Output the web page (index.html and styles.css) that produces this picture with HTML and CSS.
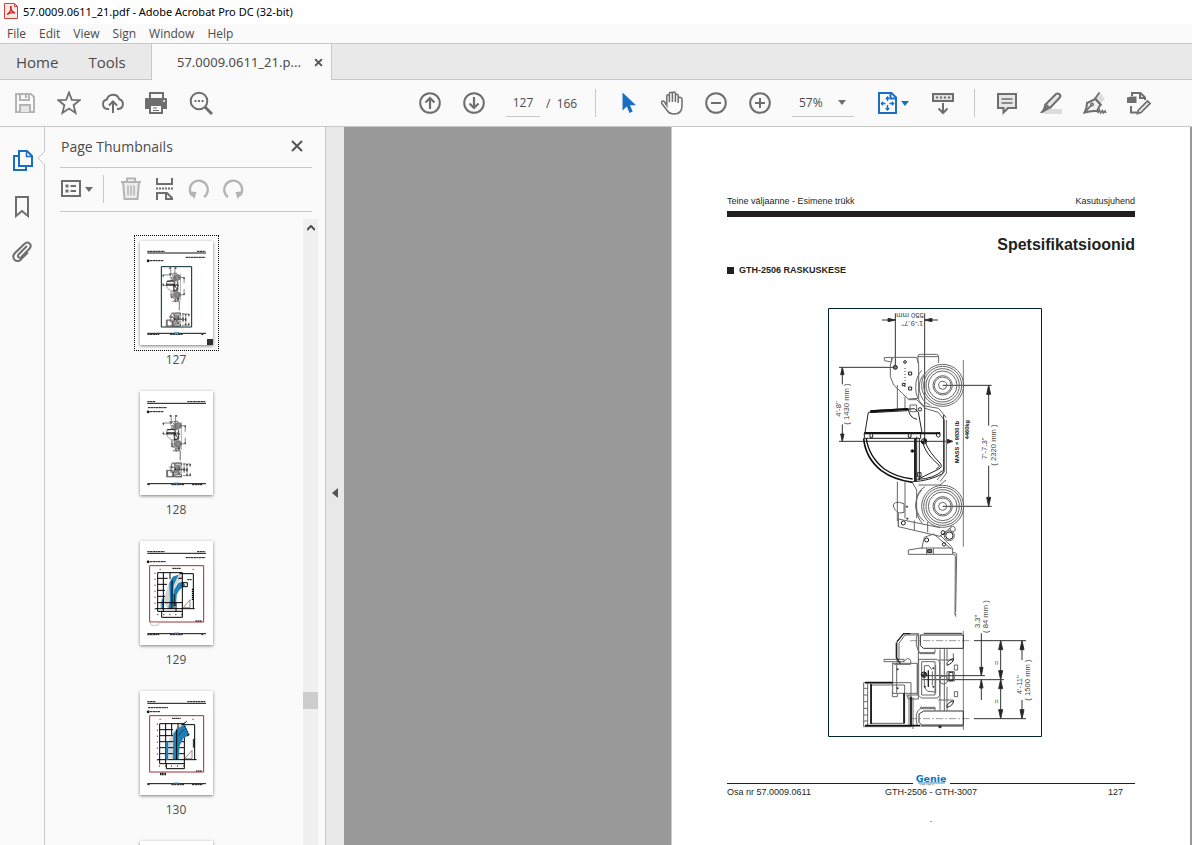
FILE: index.html
```html
<!DOCTYPE html>
<html lang="en">
<head>
    <meta charset="UTF-8">
    <title>57.0009.0611_21.pdf - Adobe Acrobat Pro DC (32-bit)</title>
    <link rel="stylesheet" href="styles.css">
</head>
<body>
    <header class="titlebar">
        <svg class="app-icon" viewBox="0 0 16 16">
            <path d="M1.500 .5h10l3 3v12h-13z" fill="#fbe9e7" stroke="#d6403a"/>
            <path d="M11.500 .5v3h3" fill="none" stroke="#d6403a"/>
            <path d="M4 11.500c2-1 5-5 4-8-1 0-.5 5 4 6.500-3-.8-5.500-.2-8 1.500z" fill="none" stroke="#d0201c" stroke-width="1.300"/>
        </svg>
        <span>57.0009.0611_21.pdf - Adobe Acrobat Pro DC (32-bit)</span>
    </header>

    <nav class="menubar">
        <button type="button">File</button>
        <button type="button">Edit</button>
        <button type="button">View</button>
        <button type="button">Sign</button>
        <button type="button">Window</button>
        <button type="button">Help</button>
    </nav>

    <div class="tabbar">
        <div class="tabs-fixed">
            <button type="button">Home</button>
            <button type="button">Tools</button>
        </div>
        <div class="tab-active">
            <button type="button" class="tab-name">57.0009.0611_21.p...</button>
            <button type="button" class="tab-close" aria-label="Close tab">
                <svg viewBox="0 0 8 8"><path d="M1 1l6 6M7 1L1 7" stroke="#555" stroke-width="1.800"/></svg>
            </button>
        </div>
        <div class="tab-rest"></div>
    </div>

    <div class="toolbar">
        <div class="group">
            <button type="button" class="tool disabled" aria-label="Save">
                <svg viewBox="0 0 24 24"><path d="M3 3h15l3 3v15H3z"/><path d="M7 3v6h9V3"/><path d="M13 4v3"/><path d="M7 21v-7h10v7" fill="#e6e6e6"/></svg>
            </button>
            <button type="button" class="tool" aria-label="Star">
                <svg viewBox="0 0 24 24"><path d="M12 1.500l2.800 7.300 7.900.4-6.100 5 2 7.700-6.600-4.300-6.600 4.300 2-7.700-6.100-5 7.900-.4z" stroke-width="1.800"/></svg>
            </button>
            <button type="button" class="tool" aria-label="Upload">
                <svg viewBox="0 0 24 24"><path d="M8 18H6.500a4.800 4.800 0 0 1-.6-9.500 6.400 6.400 0 0 1 12.300-.3A5 5 0 0 1 17.500 18H16"/><path d="M12 22V11M8 14.500l4-4 4 4"/></svg>
            </button>
            <button type="button" class="tool" aria-label="Print">
                <svg viewBox="0 0 24 24"><path d="M5 7V2h13v5"/><path d="M0 8q0-1 1-1h20q1 0 1 1v10H0z" fill="#6e6e6e" stroke="none"/><path d="M5 14h12v8H5z" fill="#fafafa"/><path d="M8 17h4M8 19.500h6" stroke-width="1"/><path d="M18 10h2" stroke="#fff" stroke-width="1.500"/></svg>
            </button>
            <button type="button" class="tool" aria-label="Find">
                <svg viewBox="0 0 24 24"><circle cx="10" cy="10" r="8.300"/><path d="M16 16l7 7" stroke-width="3"/><path d="M5.500 10h2M9 10h2M12.500 10h2"/></svg>
            </button>
        </div>

        <div class="group">
            <button type="button" class="tool" aria-label="Previous page">
                <svg viewBox="0 0 24 24"><circle cx="12" cy="12" r="9.800"/><path d="M12 18V7.500M7.500 11.500L12 7l4.500 4.500" stroke-width="2.200"/></svg>
            </button>
            <button type="button" class="tool" aria-label="Next page">
                <svg viewBox="0 0 24 24"><circle cx="12" cy="12" r="9.800"/><path d="M12 6v10.500M7.500 12.500L12 17l4.500-4.500" stroke-width="2.200"/></svg>
            </button>
            <input type="text" class="page-number" value="127" aria-label="Page number">
            <span class="page-total">/&nbsp; 166</span>
            <span class="divider"></span>
            <button type="button" class="tool" aria-label="Select">
                <svg viewBox="0 0 24 24"><path d="M6.500 1.500v18l4.300-4 2.700 6.500 3.200-1.400-2.700-6.300h6z" fill="#1b6fc2" stroke="none"/></svg>
            </button>
            <button type="button" class="tool" aria-label="Pan">
                <svg viewBox="0 0 24 24"><path d="M6.800 14.500V5.200q0-1.500 1.200-1.500t1.400 1.500V11 2.800q0-1.500 1.500-1.500t1.500 1.500V11 2.600q0-1.500 1.500-1.500t1.500 1.500V11 4.800q0-1.500 1.400-1.500t1.400 1.500V12 7.800q0-1.500 1.500-1.500T22 7.800V15q0 8-8 8-4.500 0-6.800-3.500L1.800 12.500q-.8-1.500.4-2.300 1.200-.6 2.400.8z" stroke-width="1.500"/></svg>
            </button>
            <button type="button" class="tool" aria-label="Zoom out">
                <svg viewBox="0 0 24 24"><circle cx="12" cy="12" r="9.800"/><path d="M7 12h10"/></svg>
            </button>
            <button type="button" class="tool" aria-label="Zoom in">
                <svg viewBox="0 0 24 24"><circle cx="12" cy="12" r="9.800"/><path d="M7 12h10M12 7v10"/></svg>
            </button>
            <div class="zoom-box">
                <select class="zoom-level" aria-label="Zoom level">
                    <option>57%</option>
                    <option>100%</option>
                </select>
                <svg class="caret" viewBox="0 0 8 5"><path d="M0 0h8L4 5z" fill="#6e6e6e"/></svg>
            </div>
            <button type="button" class="tool fit" aria-label="Fit page">
                <svg viewBox="0 0 24 24"><path d="M3 2h12.500L20 6.500V22H3z"/><path d="M14.500 2v5.500H20"/><path d="M11.500 6v4M9.800 8l1.700-2 1.700 2M11.500 14v5M9.800 17l1.700 2 1.700-2M5.500 12.500h4M7 10.800l-1.500 1.700L7 14.200M13.500 12.500h4M16 10.800l1.500 1.700-1.500 1.700" stroke-width="1.400"/></svg>
                <svg class="caret" viewBox="0 0 8 5"><path d="M0 0h8L4 5z" fill="#1b6fc2" stroke="none"/></svg>
            </button>
            <button type="button" class="tool" aria-label="Scrolling">
                <svg viewBox="0 0 24 24"><path d="M2 3h20v7H2z" fill="#e0e0e0"/><path d="M5 6.500h14" stroke-dasharray="2 2"/><path d="M12 12v10M7.500 17.500L12 22l4.500-4.500"/></svg>
            </button>
            <span class="divider"></span>
            <button type="button" class="tool" aria-label="Comment">
                <svg viewBox="0 0 24 24"><path d="M3 3h18v14h-8l-4.500 4.500V17H3z" fill="#e6e6e6"/><path d="M6.500 8h11M6.500 12h11" stroke-width="1.500"/></svg>
            </button>
            <button type="button" class="tool" aria-label="Highlight">
                <svg viewBox="0 0 24 24"><path d="M8 18h15v5H4z" fill="#dcdcdc" stroke="none"/><path d="M6.500 13.500L17 3q1.500-1.200 3.500.2 1.600 1.600.3 3.300L11 17z" fill="#e6e6e6"/><path d="M5.500 13.500l5 4.500-3 1.500-4 2.500H1l3-4z" fill="#6e6e6e" stroke="none"/></svg>
            </button>
            <button type="button" class="tool" aria-label="Sign">
                <svg viewBox="0 0 24 24"><path d="M14 7l3-5 5 6-4 4z" fill="#dcdcdc" stroke="none"/><path d="M1.500 21.500q2.500-4 2.500-9.500l8.500-4 5 5.500-3.500 6.500q-6-.5-12.500 1.500z" fill="#f0f0f0"/><path d="M11.500 6.500l7 8M12.500 7L16.500 1.500M2 21l6-6.500" stroke-width="1.800"/><circle cx="9" cy="13.500" r="1.200" stroke-width="1.500"/><path d="M14.500 22l2-3 1 3 2-2.500.8 2.500 1.800-2 .8 2" stroke-width="1.500"/></svg>
            </button>
            <button type="button" class="tool" aria-label="More tools">
                <svg viewBox="0 0 24 24"><path d="M5 5V2h8.500L18 6.500V9M13 2v5h5M4 15v6.500h6"/><path d="M0 6.500L4 5.500h5.500V12H0z" fill="#6e6e6e" stroke="none"/><path d="M11.500 19L20.500 10l2.500 2.500-9 9-3.500 1z" fill="#e6e6e6" stroke-width="1.700"/></svg>
            </button>
        </div>
    </div>

    <main class="workspace">
        <nav class="rail">
            <button type="button" class="rail-btn active" aria-label="Page Thumbnails">
                <svg viewBox="0 0 24 24"><path d="M9 3h8l5 5v10H9z"/><path d="M16.500 3v5.500H22" stroke-width="1.500"/><path d="M9 8H4v14h12v-4"/></svg>
            </button>
            <button type="button" class="rail-btn" aria-label="Bookmarks">
                <svg viewBox="0 0 24 24"><path d="M6 3h12v19l-6-5-6 5z"/></svg>
            </button>
            <button type="button" class="rail-btn" aria-label="Attachments">
                <svg viewBox="0 0 24 24"><path d="M17 6l-8.500 8.500q-1.200 1.500 0 2.700 1.300 1.100 2.600 0l8.500-8.700q2.300-2.800 0-5-2.500-2.100-5 .2L5 13q-3.200 3.500-.5 6.700 3.200 2.700 6.500-.3l7-7"/></svg>
            </button>
        </nav>

        <section class="panel">
            <svg class="pointer" viewBox="0 0 8 14"><path d="M8 0L1 7l7 7" fill="#fafafa" stroke="#c8c8c8"/></svg>
            <div class="panel-head">
                <h2>Page Thumbnails</h2>
                <button type="button" class="panel-close" aria-label="Close panel">
                    <svg viewBox="0 0 12 12"><path d="M1 1l10 10M11 1L1 11" stroke="#555" stroke-width="2"/></svg>
                </button>
            </div>
            <div class="panel-tools">
                <button type="button" class="options" aria-label="Options">
                    <svg viewBox="0 0 24 24"><path d="M2 4h18v15H2z"/><path d="M5.500 9h3M5.500 14h3" stroke-width="3"/><path d="M10.500 9H16M10.500 14H16"/></svg>
                    <svg class="caret" viewBox="0 0 8 5"><path d="M0 0h8L4 5z" fill="#6e6e6e" stroke="none"/></svg>
                </button>
                <span class="divider"></span>
                <button type="button" class="disabled" aria-label="Delete">
                    <svg viewBox="0 0 24 24"><path d="M2 5h20M8 4.500V1.500h8v3"/><path d="M4 5h16l-1.500 17h-13z" fill="#ececec"/><path d="M9 8.500v10M12 8.500v10M15 8.500v10" stroke-width="1.500"/></svg>
                </button>
                <button type="button" aria-label="Split">
                    <svg viewBox="0 0 24 24"><path d="M4 1v6h15V1M4 23v-7h10l5 5v2M13 16v6h6"/><path d="M3 11.500h18" stroke-dasharray="2 1"/></svg>
                </button>
                <button type="button" class="disabled" aria-label="Rotate left">
                    <svg viewBox="0 0 24 24"><path d="M5 18.500A9 9 0 1 1 17 20" stroke-width="2.400"/><path d="M1.500 14.500l8 .5-2 7z" fill="#b4b4b4" stroke="none"/></svg>
                </button>
                <button type="button" class="disabled" aria-label="Rotate right">
                    <svg viewBox="0 0 24 24"><path d="M19 18.500A9 9 0 1 0 7 20" stroke-width="2.400"/><path d="M22.500 14.500l-8 .5 2 7z" fill="#b4b4b4" stroke="none"/></svg>
                </button>
            </div>

            <div class="thumbs-area">
                <div class="thumbs">
                    <button type="button" class="thumb selected">
                        <svg class="sheet" viewBox="60 17 219 312">
                            <g class="rules"><path d="M82 53H258M82 294H164M174 294H258"/><path d="M82 48H134M231 48H256M197 66H256M90 76H131M82 297H118M150 297H188M244 297H250" stroke-dasharray="7 1"/><path d="M82 74h5v5h-5z"/></g>
                            <path d="M162 293h15" stroke="#0877bd" stroke-width="4"/>
                            <path d="M124 94h91v181h-91z" fill="none" stroke="#01262a" stroke-width="3"/>
                            <use href="#machine" transform="translate(122 92) scale(.143)" stroke-width="12"/>
                        </svg>
                        <span>127</span>
                    </button>
                    <button type="button" class="thumb">
                        <svg class="sheet" viewBox="60 17 219 312">
                            <g class="rules"><path d="M82 54H258M82 295H164M174 295H258"/><path d="M82 49H107M202 49H256M84 67H141M90 79H131M82 298H90M154 298H192M216 298H248" stroke-dasharray="7 1"/><path d="M82 77h5v5h-5z"/></g>
                            <path d="M162 294h15" stroke="#0877bd" stroke-width="4"/>
                            <use href="#machine" transform="translate(122 85) scale(.15)" stroke-width="12"/>
                        </svg>
                        <span>128</span>
                    </button>
                    <button type="button" class="thumb">
                        <svg class="sheet" viewBox="60 17 219 312">
                            <g class="rules"><path d="M82 54H258M82 295H164M174 295H258"/><path d="M82 49H134M231 49H256M197 67H256M90 79H138M82 298H118M150 298H188M244 298H250" stroke-dasharray="7 1"/><path d="M82 77h5v5h-5z"/></g>
                            <path d="M162 294h15" stroke="#0877bd" stroke-width="4"/>
                            <path d="M89 91h162v169H89z" fill="none" stroke="#a03030" stroke-width="3"/>
                            <path d="M118 102h6M217 102h6" stroke="#d66" stroke-width="3"/>
                            <path d="M148 140l12-17 22-8 7 12-19 18-9 30-2 47h-16l-9-20-8 20-7-4 4-27 12-10z" fill="#d5d5d5"/>
                            <path d="M148 144l10-20 18-6-8 16-7 16-4 70h-12l5-25zM162 165l12-21 14-6 8 12-18 14-8 14-2 34h-8zM124 200l7-16v38h-6z" fill="#1d7fb5"/>
                            <g fill="none" stroke="#000" stroke-width="3"><path d="M113 112h74v134M113 129h30M175 129h12M113 147h28M113 165h22M113 183h22M113 202h74M106 220h118M113 112v116h74M130 112v118M150 112v20M168 202v26M125 228v18h62M178 115h42v105"/><path d="M188 142h14v12h-14zM156 135v85M162 175v45"/><path d="M190 217l20-24v24z" stroke="#555" stroke-width="2"/><path d="M157 99h26M226 257h20M202 133h14" stroke-dasharray="5 1"/><path d="M105 112v110M112 238h74" stroke-dasharray="3 15"/><path d="M218 160v35" stroke-width="5" stroke-dasharray="4 2"/></g>
                            <path d="M91 262l3 8h20l3-8" fill="#fff" stroke="#555"/>
                        </svg>
                        <span>129</span>
                    </button>
                    <button type="button" class="thumb">
                        <svg class="sheet" viewBox="60 17 219 312">
                            <g class="rules"><path d="M82 54H258M82 295H164M174 295H258"/><path d="M82 49H107M202 49H256M84 67H144M90 79H120M82 298H90M154 298H192M216 298H248" stroke-dasharray="7 1"/><path d="M82 77h5v5h-5z"/></g>
                            <path d="M162 294h15" stroke="#0877bd" stroke-width="4"/>
                            <path d="M89 91h162v169H89z" fill="none" stroke="#a03030" stroke-width="3"/>
                            <path d="M118 102h6M216 102h6" stroke="#d66" stroke-width="3"/>
                            <path d="M145 170l15-30 14-18 18-8v26l-20 30-3 50h-20z" fill="#d5d5d5"/>
                            <g fill="none" stroke="#000" stroke-width="3"><path d="M119 115h74v135M119 133h40M119 151h40M119 169h74M119 187h74M119 205h74M112 223h118M119 115v120h74M137 115v120M155 115v36M174 115v18M139 235v15h54M184 118h40v105"/></g>
                            <path d="M160 145l12-14 22-14 14 32-18 10-11 22-3 40h-17zM136 172l9-5v56h-8z" fill="#1d7fb5"/>
                            <g fill="none" stroke="#000" stroke-width="3"><path d="M170 132v91M190 116l10-8M208 148l-7 4"/><path d="M176 150l14-16M194 122l12 26" stroke-dasharray="4 4"/><path d="M194 220l22-25v25z" stroke="#555" stroke-width="2"/><path d="M156 99h26M228 257h18" stroke-dasharray="5 1"/><path d="M112 115v110M117 242h74" stroke-dasharray="3 15"/><path d="M221 162v25" stroke-width="5" stroke-dasharray="4 2"/></g>
                            <path d="M120 266h18" stroke="#222" stroke-width="8" stroke-dasharray="4 1"/>
                        </svg>
                        <span>130</span>
                    </button>
                    <button type="button" class="thumb" aria-label="131">
                        <svg class="sheet" viewBox="60 17 219 312"></svg>
                    </button>
                </div>
                <div class="scrollbar">
                    <button type="button" class="scroll-up" aria-label="Scroll up">
                        <svg viewBox="0 0 8 6"><path d="M0 5l4-4 4 4" fill="none" stroke="#505050" stroke-width="2"/></svg>
                    </button>
                    <div class="scroll-thumb"></div>
                </div>
            </div>
        </section>

        <button type="button" class="splitter" aria-label="Collapse panel">
            <svg viewBox="0 0 6 10"><path d="M6 0v10L0 5z" fill="#555"/></svg>
        </button>

        <section class="document">
            <article class="page" lang="et">
                <div class="page-head">
                    <span>Teine väljaanne - Esimene trükk</span>
                    <span>Kasutusjuhend</span>
                </div>
                <h1>Spetsifikatsioonid</h1>
                <h3>GTH-2506 RASKUSKESE</h3>

                <svg class="figure" viewBox="9 9 642 1287">
                    <defs>
                        <g id="machine" fill="none" stroke="#333">
                            <!-- dimension lines, side view -->
                            <path d="M171 45H211M299 45H339M211 25V187M299 25V408M42 187H211M42 409H380M52 187V238M52 358V409M353 241H500M353 604H500M491 241V362M491 482V604"/>
                            <path d="M415 165V725M415 978V1275" stroke="#777"/>
                            <path d="M211 45l-22-5v10zM299 45l22-5v10zM52 187l-5 22h10zM52 409l-5-22h10zM491 241l-6 27h12zM491 604l-6-27h12zM383 409l-16-6v12z" fill="#222"/>
                            <!-- tyres -->
                            <g stroke="#666">
                                <circle cx="353" cy="241" r="63"/><circle cx="353" cy="241" r="57"/><circle cx="353" cy="241" r="50"/><circle cx="353" cy="241" r="43"/><circle cx="353" cy="241" r="29"/><circle cx="353" cy="241" r="25"/><circle cx="353" cy="241" r="12"/>
                                <circle cx="353" cy="604" r="63"/><circle cx="353" cy="604" r="57"/><circle cx="353" cy="604" r="50"/><circle cx="353" cy="604" r="43"/><circle cx="353" cy="604" r="29"/><circle cx="353" cy="604" r="25"/><circle cx="353" cy="604" r="12"/>
                            </g>
                            <!-- chassis and boom -->
                            <g stroke="#666">
                                <path d="M178 158v9l22 4V157zM203 157H275l6 20V280L250 282 232 265 206 240 196 215V180zM279 175V153q0-5 7-5h48q6 0 7 8v18M279 155h62M290 196q-18 20-18 52t23 54l46 8M300 205q-20 18-17 50 5 34 33 46"/>
                                <path d="M217 240V312M240 275V312M250 284H275L300 310 340 322 358 345V500L336 525M364 345V505L345 530M341 310l23 28M255 300h20v20h-20z"/>
                                <path d="M217 530V648M240 530V640M262 532L275 555V640M205 598q5-8 18-6l14 4v26l-14 2q-18-8-18-26M290 555q-18 20-18 50 3 32 20 50M300 545q-28 15-27 58 5 35 25 45M280 540h65l18-15"/>
                                <path d="M220 642V665L345 694 380 665M220 625V665M220 642L345 668M268 646v30M308 650v32M290 732l8-35 28-10 53 45M250 735l38-6h95v19H250zM305 729v19M325 729v19M345 690l35 35"/>
                                <circle cx="373" cy="692" r="15"/><circle cx="373" cy="692" r="11" stroke="#222"/><circle cx="383" cy="672" r="8"/>
                                <path d="M383 743h6q6 0 6 8l-3 170M383 748h3q5 0 5 7l-1 175M392 925v10"/>
                                <path d="M240 190v60" stroke-dasharray="2 7" stroke-width="5"/>
                            </g>
                            <g stroke="#222">
                                <circle cx="211" cy="187" r="6" fill="#777"/><circle cx="240" cy="171" r="4"/><path d="M251 201h9v9h-9zM251 246h9v9h-9zM232 235h8v7h-8z"/><circle cx="285" cy="313" r="5"/><circle cx="235" cy="654" r="6"/><circle cx="305" cy="705" r="6"/><circle cx="354" cy="683" r="6"/><circle cx="357" cy="718" r="5"/><circle cx="246" cy="605" r="2"/><circle cx="247" cy="641" r="2"/><path d="M308 734h12v9h-12z" fill="#777"/>
                            </g>
                            <!-- cab -->
                            <g stroke="#222">
                                <path d="M130 322l138-11 12 10 11 62H120zM137 317l110-6v6l-110 6zM250 313q3 25 26 30"/>
                                <path d="M118 383H287v17H118z"/>
                                <path d="M118 385H345M137 319l113-7" stroke="#111" stroke-width="6"/>
                                <path d="M116 400q5 58 53 97 38 28 94 35" stroke="#111" stroke-width="5"/>
                                <path d="M124 400q7 54 54 92 36 25 85 30" stroke="#111" stroke-width="4"/>
                                <path d="M270 400V528" stroke-width="6"/><path d="M275 395V528M283 400V525M263 530q50-2 90-24l3-14V330M300 410q12 32 45 64 10 12-5 19l-62 30M294 417q10 30 42 58 15 10-2 16M278 523q50-2 74-26"/>
                                <circle cx="297" cy="409" r="8"/><path d="M297 401a8 8 0 0 1 8 8h-8zM297 417a8 8 0 0 1-8-8h8z" fill="#111"/><circle cx="262" cy="438" r="4" fill="#111"/><path d="M278 503h10v12h-10zM335 383h10v10l-5 4-6-4zM135 385h8v12h-8zM250 385h8v12h-8z"/>
                            </g>
                            <!-- front view -->
                            <g transform="translate(0 585)">
                                <path d="M447 422H603M447 656H603M290 527H480M290 539H537M591 422V480M591 600V656M527 422V656M469 400V527M469 539V600"/>
                                <path d="M591 422l-6 27h12zM591 656l-6-27h12zM527 422l-6 27h12zM527 539l-6-27h12zM527 539l-6 27h12zM527 656l-6-27h12zM469 527l-5-25h10zM469 539l-5 25h10z" fill="#222"/>
                                <path d="M255 422H437M255 656H437" stroke="#999" stroke-dasharray="22 6 5 6"/>
                                <path d="M286 405h129V445H296l-10-8zM296 633h119v42H290l-8-8V642zM296 400h115M286 678h129" stroke="#333"/>
                                <g stroke="#666">
                                    <path d="M277 403q-10 30 8 58h45M277 678q-10-40 8-52h45M330 448v10h-45M330 632v-10h-45"/>
                                    <path d="M216 492V425l20-24h45v60M222 480v-50l18-25M240 405h40v85M177 478h60v7h-60zM237 485q10-16 20-4v12h-50"/>
                                    <path d="M203 487V580H277V490H203M215 493v85M202 575v15h15v-10M277 490V585M281 478h55l8 8V586l-7 8h-48l-8-8zM290 485h40v100h-40z"/>
                                    <path d="M298 497h14l8 12M298 497v65l10 12 24 2M322 514V556M332 495v85"/>
                                    <path d="M345 448V632M358 445v188M366 448v35M366 560v72M385 460v22M340 480h45M340 600h45M366 515h22v28h-22zM388 495v15h10v-15zM388 575v15h10v-15z"/>
                                    <path d="M116 548H258V680H116zM128 552V675M139 555v115h100V555zM252 585v92M264 592v95M245 585h35v12h-30z"/>
                                    <path d="M116 565h12M116 585h12M116 605h12M116 625h12M116 645h12M116 663h12"/>
                                </g>
                                <path d="M216 425l20-24h20M214 428v45l12 18M310 511V561" stroke="#222" stroke-width="4"/>
                                <path d="M366 488q8-12 20-12-2 14-20 20zM366 616q8-12 20-14-2 16-20 20zM372 517h12v25h-12z" stroke="#222"/>
                                <circle cx="297" cy="524" r="8" stroke="#111"/><path d="M297 516v8h8zM297 532v-8h-8z" fill="#111"/><circle cx="356" cy="540" r="12" stroke="#666"/>
                                <path d="M120 548H203M120 677H285M138 552v120M237 580v90M258 590v90" stroke="#111" stroke-width="5"/>
                                <g fill="#333" stroke="none"><circle cx="218" cy="508" r="3"/><circle cx="218" cy="565" r="3"/><circle cx="300" cy="560" r="3"/><circle cx="325" cy="505" r="3"/><circle cx="325" cy="560" r="3"/><circle cx="345" cy="680" r="5"/></g>
                            </g>
                        </g>
                    </defs>
                    <path class="frame" d="M10.500 10.500h639v1284h-639z"/>
                    <use href="#machine" stroke-width="3"/>
                    <g class="dims">
                        <text transform="translate(255 23) rotate(180)">550 mm</text>
                        <text transform="translate(262 49) rotate(180)">1'-9.7"</text>
                        <text transform="translate(47 312) rotate(-90)">4'-8"</text>
                        <text transform="translate(73 297) rotate(-90)">( 1430 mm )</text>
                        <text transform="translate(487 430) rotate(-90)">7'-7.3"</text>
                        <text transform="translate(513 420) rotate(-90)">( 2320 mm )</text>
                        <text transform="translate(466 949) rotate(-90)">3.3"</text>
                        <text transform="translate(490 935) rotate(-90)">( 84 mm )</text>
                        <text transform="translate(591 1139) rotate(-90)">4'-11"</text>
                        <text transform="translate(614 1125) rotate(-90)">( 1500 mm )</text>
                        <text transform="translate(523 1073) rotate(-90)">=</text>
                        <text transform="translate(523 1189) rotate(-90)">=</text>
                    </g>
                    <g class="mass">
                        <text transform="translate(402 411) rotate(-90)">MASS = 9830 lb</text>
                        <text transform="translate(432 374) rotate(-90)">4460kg</text>
                    </g>
                </svg>

                <div class="page-foot">
                    <div class="foot-rule">
                        <svg class="logo" viewBox="0 0 37 15">
                            <text x="18" y="10" text-anchor="middle">Genie</text>
                            <path d="M3 11.500h31" stroke="#0877bd"/>
                            <path d="M5 13.500h17" stroke="#888" stroke-dasharray="1 1 4 1"/>
                        </svg>
                    </div>
                    <div class="foot-text">
                        <span>Osa nr 57.0009.0611</span>
                        <span>GTH-2506 - GTH-3007</span>
                        <span class="folio">127</span>
                    </div>
                    <div class="foot-mark">.</div>
                </div>
            </article>
        </section>
    </main>
</body>
</html>
```

FILE: styles.css
```css
* {
    box-sizing: border-box;
}
body {
    margin: 0;
    height: 100vh;
    display: flex;
    flex-direction: column;
    overflow: hidden;
    font-family: "Open Sans", "Noto Sans", sans-serif;
    font-size: 12px;
    color: #4b4b4b;
    background: #fafafa;
}
button {
    padding: 0;
    border: none;
    background: none;
    font: inherit;
    color: inherit;
    cursor: pointer;
}
svg {
    display: block;
}

/* title and menu */
.titlebar {
    display: flex;
    align-items: center;
    gap: 4px;
    height: 24px;
    padding: 0 0 2px 3px;
    background: #fff;
    color: #000;
    font-family: "Noto Sans", sans-serif;
    font-size: 11px;
}
.app-icon {
    width: 16px;
    height: 16px;
}
.menubar {
    display: flex;
    gap: 13px;
    height: 19px;
    padding-left: 7px;
    line-height: 18px;
}

/* tabs */
.tabbar {
    display: flex;
    height: 37px;
    border-top: 1px solid #c8c8c8;
    font-size: 15px;
}
.tabs-fixed, .tab-rest {
    background: #e9e9e9;
    border-bottom: 1px solid #c8c8c8;
}
.tabs-fixed {
    display: flex;
    gap: 30px;
    width: 151px;
    padding-left: 16px;
}
.tab-active {
    display: flex;
    align-items: center;
    justify-content: space-between;
    width: 181px;
    padding: 0 8px 0 25px;
    border: 1px solid #c8c8c8;
    border-width: 0 1px;
    font-family: "Noto Sans", sans-serif;
    font-size: 13px;
}
.tab-close svg {
    width: 9px;
    height: 9px;
}
.tab-rest {
    flex: 1;
}

/* toolbar */
.toolbar {
    display: flex;
    justify-content: space-between;
    height: 47px;
    padding: 0 31px 0 3px;
    border-bottom: 1px solid #c8c8c8;
}
.group {
    display: flex;
    align-items: center;
}
.tool {
    display: flex;
    align-items: center;
    justify-content: center;
    width: 44px;
    height: 44px;
}
.tool svg, .rail-btn svg, .panel-tools svg {
    width: 24px;
    height: 24px;
    fill: none;
    stroke: #6e6e6e;
    stroke-width: 2;
}
.disabled svg {
    stroke: #b4b4b4;
}
.tool .caret, .panel-tools .caret, .caret {
    width: 8px;
    height: 5px;
}
.page-number {
    width: 34px;
    height: 28px;
    margin: 0 6px 0 10px;
    padding: 0;
    border: none;
    border-bottom: 1px solid #c8c8c8;
    background: none;
    font: inherit;
    color: inherit;
    text-align: center;
}
.page-total {
    width: 40px;
}
.divider {
    width: 1px;
    height: 28px;
    margin: 0 10px 0 9px;
    background: #c8c8c8;
}
.zoom-box {
    display: flex;
    align-items: center;
    width: 62px;
    height: 28px;
    margin: 0 10px;
    padding: 0 8px 0 7px;
    border-bottom: 1px solid #c8c8c8;
}
.zoom-level {
    flex: 1;
    padding: 0;
    border: none;
    background: none;
    appearance: none;
    font: inherit;
    color: inherit;
}
.fit {
    gap: 1px;
    width: 57px;
}
.fit svg {
    stroke: #1b6fc2;
}

/* left rail */
.workspace {
    display: flex;
    flex: 1;
    min-height: 0;
}
.rail {
    display: flex;
    flex-direction: column;
    align-items: center;
    gap: 22px;
    width: 45px;
    padding-top: 21px;
    border-right: 1px solid #c8c8c8;
}
.rail-btn.active svg {
    stroke: #1b6fc2;
}

/* thumbnails panel */
.panel {
    position: relative;
    display: flex;
    flex-direction: column;
    width: 281px;
    border-right: 1px solid #c8c8c8;
}
.pointer {
    position: absolute;
    left: -8px;
    top: 24px;
    width: 8px;
    height: 14px;
}
.panel-head, .panel-tools {
    display: flex;
    align-items: center;
    margin: 0 13px 0 15px;
    border-bottom: 1px solid #c8c8c8;
}
.panel-head {
    justify-content: space-between;
    height: 41px;
    padding: 0 9px 2px 1px;
}
.panel-head h2 {
    margin: 0;
    font-size: 14px;
    font-weight: normal;
}
.panel-close svg {
    width: 12px;
    height: 12px;
}
.panel-tools {
    gap: 10px;
    height: 44px;
    padding-bottom: 1px;
}
.panel-tools .divider {
    margin: 0 5px 0 0;
}
.options {
    display: flex;
    align-items: center;
    gap: 1px;
}
.thumbs-area {
    display: flex;
    flex: 1;
    min-height: 0;
    padding: 7px 7px 0 0;
}
.thumbs {
    display: flex;
    flex: 1;
    flex-direction: column;
    align-items: center;
    gap: 22px;
    padding: 22px 0 0 4px;
    overflow: hidden;
}
.thumb {
    display: flex;
    flex-direction: column;
    align-items: center;
    gap: 6px;
    flex: none;
    line-height: 18px;
}
.sheet {
    width: 73px;
    height: 104px;
    background: #fff;
    box-shadow: 0 1px 3px rgba(0, 0, 0, 0.5);
}
.selected .sheet {
    outline: 1px dotted #000;
    outline-offset: 5px;
    background: linear-gradient(#333, #333) right bottom / 6px 6px no-repeat #fff;
}
.rules {
    fill: #111;
    stroke: #111;
    stroke-width: 3;
}
.scrollbar {
    width: 15px;
    background: #f0f0f0;
}
.scroll-up {
    display: flex;
    align-items: center;
    justify-content: center;
    width: 15px;
    height: 17px;
}
.scroll-up svg {
    width: 8px;
    height: 6px;
}
.scroll-thumb {
    height: 17px;
    margin-top: 456px;
    background: #cdcdcd;
}
.splitter {
    display: flex;
    align-items: center;
    justify-content: center;
    width: 18px;
    padding-top: 14px;
    background: #e8e8e8;
}
.splitter svg {
    width: 6px;
    height: 10px;
}

/* document */
.document {
    display: flex;
    flex: 1;
    justify-content: flex-end;
    padding-right: 2px;
    background: #999;
    overflow: hidden;
}
.page {
    width: 519px;
    padding: 68px 55px 0;
    border-left: 1px solid #ccc;
    background: #fff;
    color: #231f20;
    font-family: "Liberation Sans", Arial, sans-serif;
    font-size: 9px;
    line-height: 12px;
}
.page-head {
    display: flex;
    justify-content: space-between;
    padding-bottom: 4px;
    border-bottom: 6px solid #231f20;
}
.page h1 {
    margin: 18px 0 0;
    font-size: 16px;
    line-height: 20px;
    text-align: right;
}
.page h3 {
    display: flex;
    align-items: center;
    gap: 5px;
    margin: 9px 0 0;
    font-size: 9px;
    line-height: 12px;
}
.page h3::before {
    content: "";
    width: 7px;
    height: 7px;
    background: #231f20;
}
.figure {
    width: 214px;
    height: 429px;
    margin: 32px 0 0 101px;
}
.frame {
    fill: none;
    stroke: #01262a;
    stroke-width: 3;
}
.dims {
    fill: #444;
    font-family: "Liberation Sans Narrow", "Liberation Sans", sans-serif;
    font-size: 23px;
    text-anchor: middle;
}
.mass {
    fill: #111;
    font-size: 17px;
    font-weight: bold;
    text-anchor: middle;
}
.foot-rule {
    display: flex;
    align-items: flex-end;
    margin-top: 36px;
}
.foot-rule::before, .foot-rule::after {
    content: "";
    flex: 1;
    height: 1px;
    margin-bottom: 2px;
    background: #231f20;
}
.logo {
    width: 37px;
    height: 13px;
    overflow: visible;
}
.logo text {
    fill: #0877bd;
    font-family: "DejaVu Sans", sans-serif;
    font-size: 11px;
    font-weight: bold;
}
.foot-text {
    display: grid;
    grid-template-columns: 1fr auto 1fr;
}
.folio {
    padding-right: 12px;
    text-align: right;
}
.foot-mark {
    margin-top: 15px;
    text-align: center;
}
```
